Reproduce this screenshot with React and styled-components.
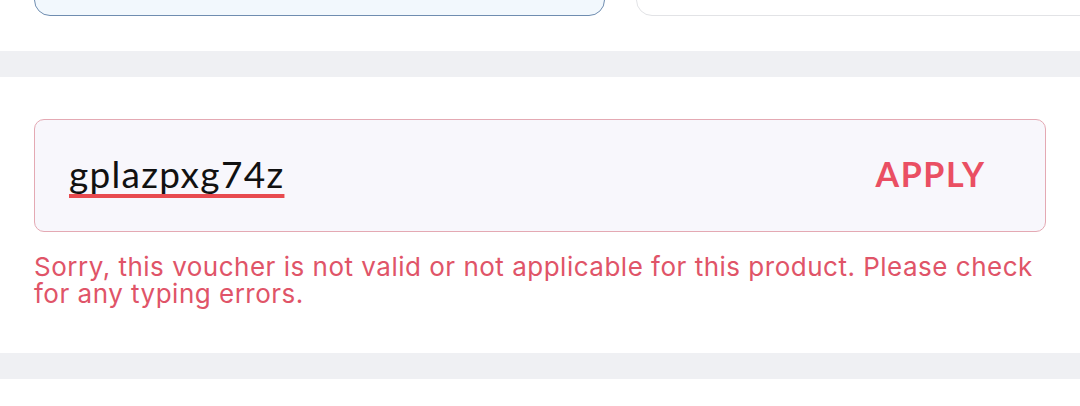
import React from 'react'
import styled, { createGlobalStyle } from 'styled-components'

const GlobalStyle = createGlobalStyle`
    html, body {
        margin: 0;
        padding: 0;
        background: #ffffff;
    }
    body {
        font-family: Lato, "Noto Sans", sans-serif;
    }
`

const Page = styled.div`
    width: 1080px;
    height: 406px;
    overflow: hidden;
    background: #ffffff;
`

const CardRow = styled.div`
    height: 51px;
    overflow: hidden;
    display: flex;
    align-items: flex-end;
    gap: 31px;
    padding: 0 0 0 34px;
`

const OptionCard = styled.div`
    flex: ${props => props.grow ? '1 0 auto' : '0 0 571px'};
    height: 80px;
    margin-bottom: 35px;
    margin-right: ${props => props.grow ? '-40px' : '0'};
    box-sizing: border-box;
    border-radius: 16px;
    background: ${props => props.active ? '#f2f8fd' : '#ffffff'};
    border: 1.5px solid ${props => props.active ? '#6f8db0' : '#e2e3e6'};
`

const Divider = styled.div`
    height: 26px;
    background: #eff0f3;
`

const VoucherSection = styled.div`
    height: 276px;
    box-sizing: border-box;
    padding: 42px 34px 0;
`

const InputBox = styled.div`
    height: 113px;
    box-sizing: border-box;
    display: flex;
    align-items: center;
    justify-content: space-between;
    padding: 0 61px 4px 34px;
    border: 1.5px solid #e4a9b3;
    border-radius: 10px;
    background: #f8f7fc;
`

const Code = styled.span`
    font-size: 37px;
    color: #111111;
    letter-spacing: 1.3px;
    text-decoration: underline;
    text-decoration-color: #e84a4f;
    text-decoration-thickness: 4px;
    text-underline-offset: 6px;
    text-decoration-skip-ink: none;
`

const ApplyButton = styled.span`
    font-size: 34px;
    font-weight: 700;
    letter-spacing: 1.6px;
    margin-right: -1.6px;
    color: #ea4f63;
`

const ErrorText = styled.p`
    margin: 21px 0 0;
    padding-right: 6px;
    font-family: Inter, "Noto Sans", sans-serif;
    font-size: 26px;
    letter-spacing: 0.5px;
    line-height: 27px;
    color: #e05468;
`

export default function App() {
    return (
        <Page>
            <GlobalStyle />
            <CardRow>
                <OptionCard active />
                <OptionCard grow />
            </CardRow>
            <Divider />
            <VoucherSection>
                <InputBox>
                    <Code>gplazpxg74z</Code>
                    <ApplyButton>APPLY</ApplyButton>
                </InputBox>
                <ErrorText>
                    Sorry, this voucher is not valid or not applicable for this product. Please check for any typing errors.
                </ErrorText>
            </VoucherSection>
            <Divider />
        </Page>
    )
}
